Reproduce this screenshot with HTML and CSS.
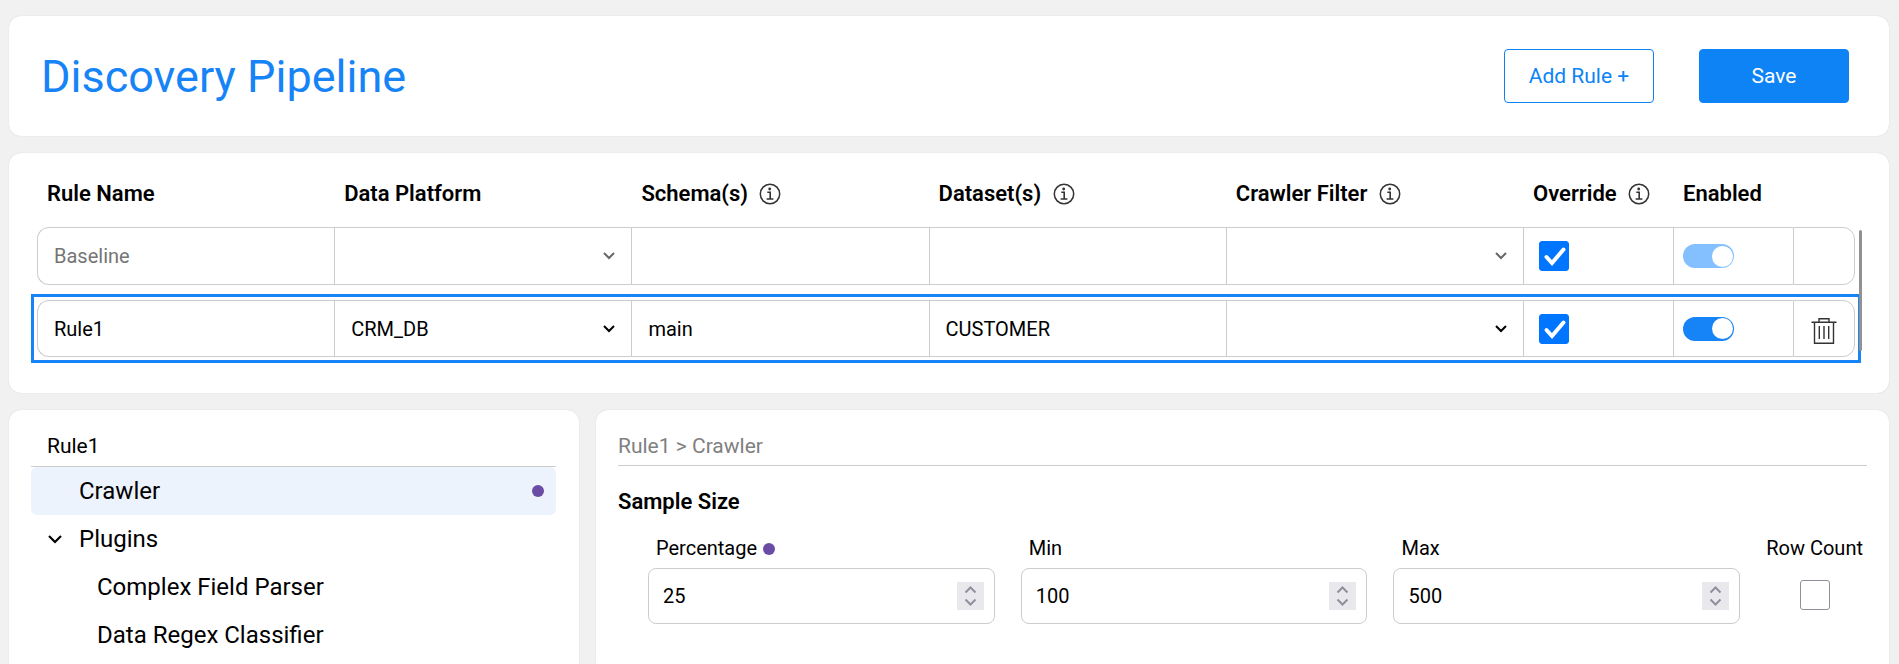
FILE: index.html
```html
<!DOCTYPE html>
<html lang="en">
<head>
    <meta charset="UTF-8">
    <meta name="viewport" content="width=device-width, initial-scale=1.0">
    <title>Discovery Pipeline</title>
    <link rel="stylesheet" href="styles.css">
</head>
<body>
    <!-- Shared icons -->
    <svg class="icon-defs" aria-hidden="true">
        <symbol id="icon-info" viewBox="0 0 22 22">
            <circle cx="11" cy="11" r="9.7" fill="none" stroke="#333" stroke-width="1.5"/>
            <circle cx="10.7" cy="6" r="1.4" fill="#333"/>
            <path d="M8.3 9.3h2.9v6.4M7.6 16h6.8" fill="none" stroke="#333" stroke-width="1.6"/>
        </symbol>
        <symbol id="icon-trash" viewBox="0 0 26 28">
            <path d="M.5 5.2h25M8 5V1.8h10V5M3.5 5.5v20.7h19V5.5M8.3 9v13M13 9v13M17.7 9v13" fill="none" stroke="#333" stroke-width="1.4"/>
        </symbol>
    </svg>

    <header class="card header">
        <h1>Discovery Pipeline</h1>
        <div class="header-buttons">
            <button type="button" class="btn">Add Rule +</button>
            <button type="button" class="btn btn-primary">Save</button>
        </div>
    </header>

    <section class="card rules">
        <table class="rules-table">
            <colgroup>
                <col><col><col><col><col>
                <col class="col-override">
                <col class="col-enabled">
                <col class="col-delete">
            </colgroup>
            <thead>
                <tr>
                    <th>Rule Name</th>
                    <th>Data Platform</th>
                    <th>Schema(s) <svg class="icon-info"><use href="#icon-info"/></svg></th>
                    <th>Dataset(s) <svg class="icon-info"><use href="#icon-info"/></svg></th>
                    <th>Crawler Filter <svg class="icon-info"><use href="#icon-info"/></svg></th>
                    <th>Override <svg class="icon-info"><use href="#icon-info"/></svg></th>
                    <th>Enabled</th>
                    <th></th>
                </tr>
            </thead>
            <tbody>
                <tr class="baseline">
                    <td><input type="text" class="cell-input" aria-label="Rule name" value="Baseline" disabled></td>
                    <td><select class="cell-select" aria-label="Data platform" disabled><option></option></select></td>
                    <td><input type="text" class="cell-input" aria-label="Schemas" disabled></td>
                    <td><input type="text" class="cell-input" aria-label="Datasets" disabled></td>
                    <td><select class="cell-select" aria-label="Crawler filter" disabled><option></option></select></td>
                    <td class="cell-check"><input type="checkbox" class="checkbox" aria-label="Override" checked></td>
                    <td class="cell-toggle"><input type="checkbox" class="toggle" role="switch" aria-label="Enabled" checked disabled></td>
                    <td></td>
                </tr>
                <tr class="selected">
                    <td><input type="text" class="cell-input" aria-label="Rule name" value="Rule1"></td>
                    <td><select class="cell-select" aria-label="Data platform"><option>CRM_DB</option></select></td>
                    <td><input type="text" class="cell-input" aria-label="Schemas" value="main"></td>
                    <td><input type="text" class="cell-input" aria-label="Datasets" value="CUSTOMER"></td>
                    <td><select class="cell-select" aria-label="Crawler filter"><option></option></select></td>
                    <td class="cell-check"><input type="checkbox" class="checkbox" aria-label="Override" checked></td>
                    <td class="cell-toggle"><input type="checkbox" class="toggle" role="switch" aria-label="Enabled" checked></td>
                    <td class="cell-delete">
                        <button type="button" class="delete-button" aria-label="Delete rule"><svg class="icon-trash"><use href="#icon-trash"/></svg></button>
                    </td>
                </tr>
            </tbody>
        </table>
        <div class="scroll-thumb"></div>
    </section>

    <div class="columns">
        <nav class="card sidebar">
            <div class="panel-title">Rule1</div>
            <ul class="tree">
                <li><a href="#crawler" class="tree-item active">Crawler <span class="dot"></span></a></li>
                <li>
                    <a href="#plugins" class="tree-item parent">
                        <svg class="chevron" viewBox="0 0 14 9"><path d="M1 1l6 6 6-6" fill="none" stroke="#000" stroke-width="2.2"/></svg>
                        Plugins
                    </a>
                    <ul>
                        <li><a href="#complex-field-parser" class="tree-item child">Complex Field Parser</a></li>
                        <li><a href="#data-regex-classifier" class="tree-item child">Data Regex Classifier</a></li>
                    </ul>
                </li>
            </ul>
        </nav>

        <main class="card details">
            <div class="breadcrumb">Rule1 &gt; Crawler</div>
            <h2>Sample Size</h2>
            <form class="sample-form">
                <div class="form-group">
                    <label for="percentage">Percentage <span class="dot"></span></label>
                    <input type="number" id="percentage" name="percentage" value="25">
                </div>
                <div class="form-group">
                    <label for="min">Min</label>
                    <input type="number" id="min" name="min" value="100">
                </div>
                <div class="form-group">
                    <label for="max">Max</label>
                    <input type="number" id="max" name="max" value="500">
                </div>
                <div class="form-group row-count">
                    <label for="rowCount">Row Count</label>
                    <input type="checkbox" class="checkbox" id="rowCount" name="rowCount">
                </div>
            </form>
        </main>
    </div>
</body>
</html>
```
FILE: styles.css
```css
* {
    box-sizing: border-box;
}

body {
    font-family: Roboto, Arial, sans-serif;
    font-size: 20px;
    line-height: 24px;
    color: #000;
    margin: 0;
    padding: 16px 10px 0 9px;
    background-color: #f1f1f1;
    min-height: 100vh;
    display: flex;
    flex-direction: column;
    gap: 17px;
}

input,
select,
button {
    font: inherit;
    color: inherit;
}

.icon-defs {
    position: absolute;
    width: 0;
    height: 0;
}

.card {
    background-color: #fff;
    border-radius: 12px;
    box-shadow: 0 0 1px rgba(0, 0, 0, 0.2);
}

/* Header */
.header {
    display: flex;
    align-items: center;
    justify-content: space-between;
    padding: 33px 40px 33px 32px;
}

h1 {
    margin: 0;
    padding-top: 2px;
    font-size: 45px;
    font-weight: 400;
    line-height: 52px;
    color: #1683f7;
}

.header-buttons {
    display: flex;
    gap: 45px;
}

.btn {
    width: 150px;
    height: 54px;
    border: 1px solid #0d83f5;
    border-radius: 4px;
    background-color: #fff;
    color: #0d83f5;
    font-size: 21px;
    cursor: pointer;
}

.btn-primary {
    background-color: #0d83f5;
    color: #fff;
}

/* Rules table */
.rules {
    position: relative;
    padding: 13px 34px 21px 28px;
}

.rules-table {
    width: 100%;
    table-layout: fixed;
    border-collapse: separate;
    border-spacing: 0 15px;
}

.col-override {
    width: 150px;
}

.col-enabled {
    width: 120px;
}

.col-delete {
    width: 62px;
}

th {
    height: 31px;
    padding: 0 0 6px 10px;
    font-size: 22px;
    font-weight: 600;
    text-align: left;
    white-space: nowrap;
}

.icon-info {
    width: 22px;
    height: 22px;
    margin-left: 6px;
    vertical-align: -4px;
}

td {
    height: 58px;
    padding: 0;
    border: 1px solid #ccc;
    border-right: none;
}

td:first-child {
    border-radius: 12px 0 0 12px;
}

td:last-child {
    border-right: 1px solid #ccc;
    border-radius: 0 12px 12px 0;
}

.selected {
    outline: 3px solid #1683f7;
    outline-offset: 3px;
}

.selected td {
    height: 57px;
}

.cell-input,
.cell-select {
    display: block;
    width: 100%;
    height: 54px;
    padding: 0 16px;
    border: none;
    background-color: transparent;
    opacity: 1;
}

.cell-select {
    appearance: none;
    background-image: url("data:image/svg+xml,%3Csvg xmlns='http://www.w3.org/2000/svg' width='12' height='8'%3E%3Cpath d='M1 1l5 5 5-5' fill='none' stroke='%23000' stroke-width='2'/%3E%3C/svg%3E");
    background-repeat: no-repeat;
    background-position: right 16px center;
}

.cell-input:disabled {
    color: #757575;
}

.cell-select:disabled {
    background-image: url("data:image/svg+xml,%3Csvg xmlns='http://www.w3.org/2000/svg' width='12' height='8'%3E%3Cpath d='M1 1l5 5 5-5' fill='none' stroke='%23666' stroke-width='2'/%3E%3C/svg%3E");
}

.cell-check {
    padding-left: 15px;
}

.cell-toggle {
    padding-left: 9px;
}

.checkbox {
    appearance: none;
    display: block;
    width: 30px;
    height: 30px;
    margin: 0;
    border: 1px solid #8f8f9d;
    border-radius: 3px;
    background-color: #fff;
}

.checkbox:checked {
    border-color: #0075ff;
    background: #0075ff url("data:image/svg+xml,%3Csvg xmlns='http://www.w3.org/2000/svg' width='28' height='28'%3E%3Cpath d='M6.5 15l5.5 6L23.5 7.5' fill='none' stroke='%23fff' stroke-width='4' stroke-linecap='round'/%3E%3C/svg%3E") center no-repeat;
}

.toggle {
    appearance: none;
    display: flex;
    align-items: center;
    justify-content: flex-end;
    width: 51px;
    height: 24px;
    margin: 0;
    padding-right: 1px;
    border-radius: 12px;
    background-color: #1683f7;
}

.toggle::before {
    content: "";
    width: 21px;
    height: 21px;
    border-radius: 50%;
    background-color: #fff;
}

.toggle:disabled {
    background-color: #84c0ff;
}

.delete-button {
    display: block;
    margin: 4px auto 0;
    padding: 0;
    border: none;
    background: none;
    cursor: pointer;
}

.icon-trash {
    display: block;
    width: 26px;
    height: 28px;
}

/* Thin scrollbar lying over the right edge of the rows */
.scroll-thumb {
    position: absolute;
    top: 77px;
    right: 27px;
    bottom: 42px;
    width: 3px;
    border-radius: 2px;
    background-color: #919191;
}

/* Bottom panels */
.columns {
    flex: 1;
    display: grid;
    grid-template-columns: 570fr 1293fr;
    gap: 17px;
}

.sidebar,
.details {
    border-radius: 12px 12px 0 0;
}

.sidebar {
    padding: 20px 23px 0 22px;
}

.panel-title {
    padding: 4px 16px 8px;
    border-bottom: 1px solid #ccc;
    font-size: 21px;
}

.tree,
.tree ul {
    list-style: none;
    margin: 0;
    padding: 0;
}

.tree-item {
    display: flex;
    align-items: center;
    justify-content: space-between;
    height: 48px;
    padding: 0 12px 0 48px;
    border-radius: 6px;
    font-size: 24px;
    color: #000;
    text-decoration: none;
}

.tree-item.active {
    background-color: #edf3fc;
}

.tree-item.parent {
    justify-content: flex-start;
    gap: 17px;
    padding-left: 17px;
}

.tree-item.child {
    padding-left: 66px;
}

.chevron {
    width: 14px;
    height: 9px;
}

.dot {
    display: inline-block;
    width: 12px;
    height: 12px;
    border-radius: 50%;
    background-color: #6b4ca5;
}

.details {
    padding: 20px 22px 0 22px;
}

.breadcrumb {
    padding: 4px 0 7px;
    border-bottom: 1px solid #ccc;
    color: #808080;
    font-size: 21px;
}

h2 {
    margin: 24px 0 22px;
    font-size: 22px;
    font-weight: 600;
    line-height: 24px;
}

.sample-form {
    display: grid;
    grid-template-columns: repeat(3, 1fr) auto;
    column-gap: 26px;
    padding: 0 4px 0 30px;
}

.form-group label {
    display: block;
    margin-bottom: 8px;
    padding-left: 8px;
}

.form-group .dot {
    margin-left: 1px;
}

.form-group input[type="number"] {
    appearance: textfield;
    width: 100%;
    height: 56px;
    padding: 0 50px 0 14px;
    border: 1px solid #ccc;
    border-radius: 8px;
    background: url("data:image/svg+xml,%3Csvg xmlns='http://www.w3.org/2000/svg' width='27' height='28'%3E%3Cpath fill='%23e9e9ed' d='M0 0h27v28H0z'/%3E%3Cpath d='M8.5 10.5l5-5 5 5M8.5 17.5l5 5 5-5' fill='none' stroke='%238f8f9d' stroke-width='2'/%3E%3C/svg%3E") right 10px center no-repeat;
}

.form-group input[type="number"]::-webkit-inner-spin-button {
    appearance: none;
}

.row-count label {
    margin-bottom: 20px;
    padding-left: 0;
}

.row-count .checkbox {
    margin: 0 auto;
}
```
